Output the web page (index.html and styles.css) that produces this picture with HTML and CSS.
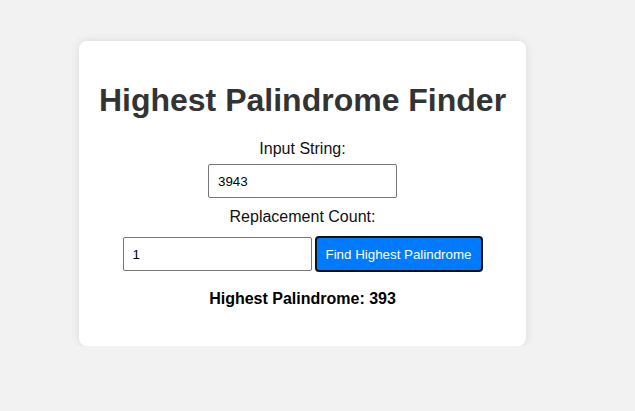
FILE: index.html
```html
<!DOCTYPE html>
<html>
<head>
<meta charset="utf-8">
<link rel="stylesheet" href="styles.css">
</head>
<body>
<div class="page">
  <div class="card">
    <h1 class="title">Highest Palindrome Finder</h1>
    <label class="label" for="s">Input String:</label>
    <input class="field field-first" id="s" type="text" value="3943">
    <label class="label label-second" for="k">Replacement Count:</label>
    <div class="row">
      <input class="field" id="k" type="text" value="1">
      <button class="btn">Find Highest Palindrome</button>
    </div>
    <p class="result">Highest Palindrome: 393</p>
  </div>
</div>
</body>
</html>
```

FILE: styles.css
```css
html, body {
  margin: 0;
  padding: 0;
  background: #f2f2f2;
  font-family: "Liberation Sans", Arial, sans-serif;
}
.page {
  width: 605px;
  padding-top: 41px;
  display: flex;
  justify-content: center;
}
.card {
  width: 447px;
  box-sizing: border-box;
  background: #fff;
  border-radius: 8px;
  box-shadow: 0 0 10px rgba(0, 0, 0, 0.1);
  padding: 20px;
  display: flex;
  flex-direction: column;
  align-items: center;
  text-align: center;
}
.title {
  font-size: 32px;
  font-weight: bold;
  color: #333;
  margin: 21px 0;
  line-height: 37px;
  white-space: nowrap;
}
.label {
  display: block;
  font-size: 16px;
  line-height: 18px;
  color: #111;
}
.label-second {
  margin-top: 10px;
}
.field {
  box-sizing: border-box;
  width: 189px;
  height: 34px;
  padding: 0 9px;
  border: 1px solid #767676;
  border-radius: 2px;
  font-family: "Liberation Sans", Arial, sans-serif;
  font-size: 13.33px;
  color: #000;
  background: #fff;
}
.field-first {
  margin-top: 6px;
}
.row {
  margin-top: 10px;
  display: flex;
  align-items: center;
  gap: 3px;
}
.btn {
  box-sizing: border-box;
  width: 168px;
  height: 36px;
  background: #007bff;
  color: #fff;
  border: 2px solid #111;
  border-radius: 4px;
  font-family: "Liberation Sans", Arial, sans-serif;
  font-size: 13.33px;
  padding: 0;
}
.result {
  margin: 18px 0;
  font-size: 16px;
  line-height: 18px;
  font-weight: bold;
  color: #000;
}
```
